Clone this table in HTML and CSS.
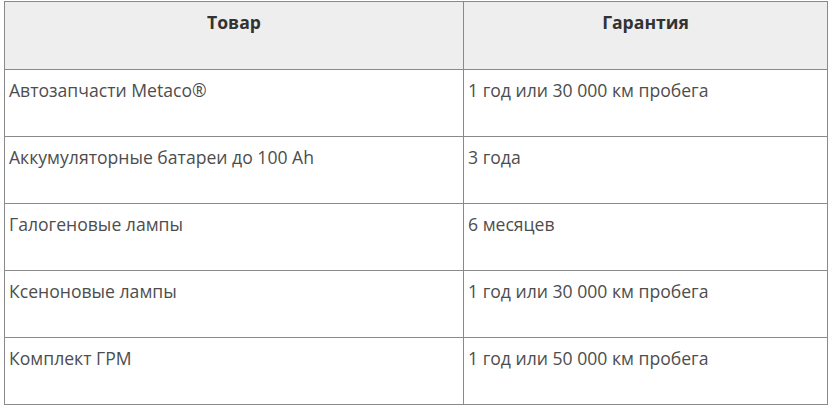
FILE: index.html
```html
<!DOCTYPE html>
<html lang="ru">
<head>
<meta charset="utf-8">
<link rel="stylesheet" href="styles.css">
</head>
<body>
<table class="warranty">
  <thead>
    <tr class="head-row"><th class="col-a">Товар</th><th>Гарантия</th></tr>
  </thead>
  <tbody>
    <tr><td class="col-a">Автозапчасти Metaco®</td><td>1 год или 30 000 км пробега</td></tr>
    <tr><td class="col-a">Аккумуляторные батареи до 100 Ah</td><td>3 года</td></tr>
    <tr><td class="col-a">Галогеновые лампы</td><td>6 месяцев</td></tr>
    <tr><td class="col-a">Ксеноновые лампы</td><td>1 год или 30 000 км пробега</td></tr>
    <tr><td class="col-a">Комплект ГРМ</td><td>1 год или 50 000 км пробега</td></tr>
  </tbody>
</table>
</body>
</html>
```
FILE: styles.css
```css
html, body {
  margin: 0;
  padding: 0;
  background: #fff;
}
body {
  padding: 1px 0 0 4px;
  font-family: "Open Sans", "Liberation Sans", sans-serif;
  font-size: 17.6px;
  color: #4d4d4d;
}
.warranty {
  border-collapse: collapse;
  width: 824px;
  table-layout: fixed;
}
.warranty th,
.warranty td {
  border: 1px solid #8a8a8a;
  vertical-align: top;
  line-height: 25px;
  padding: 8px 4px;
  height: 50px;
  text-align: left;
}
.warranty th {
  background: #eeeeee;
  color: #333;
  font-weight: 700;
  text-align: center;
  height: 51px;
}
.col-a {
  width: 450px;
}
```
